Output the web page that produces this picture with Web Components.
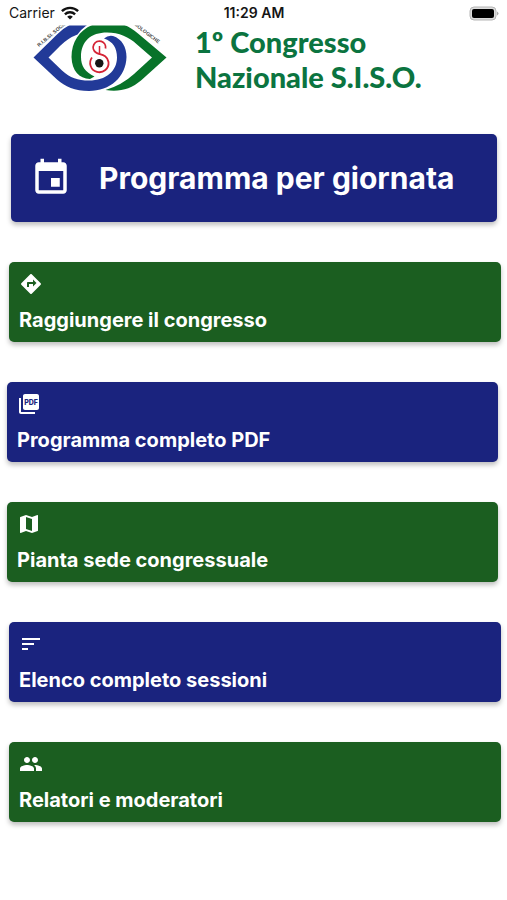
<!DOCTYPE html>
<html lang="it">
<head>
<meta charset="utf-8">
<meta name="viewport" content="width=device-width, initial-scale=1">
<title>1º Congresso Nazionale S.I.S.O.</title>
<style>
  body { margin: 0; background: #fff; font-family: Inter, "Liberation Sans", sans-serif; }
</style>
</head>
<body>
<congress-app></congress-app>

<template id="status-bar">
  <style>
    :host { display: grid; grid-template-columns: 1fr auto 1fr; align-items: center; height: 26px; padding: 0 8px 0 9px; box-sizing: border-box; color: #151515; font-size: 14px; line-height: 26px; }
    .left { display: flex; align-items: center; gap: 6px; }
    .time { font-weight: 600; }
    .right { display: flex; justify-content: flex-end; }
    svg { display: block; }
  </style>
  <div class="left"><span>Carrier</span>
    <svg width="18" height="14" viewBox="0 0 18 14" fill="none" stroke="#111" stroke-width="2.4" aria-label="Wi-Fi"><path d="M.9 5.2C5.400.8 12.600.8 17.100 5.200M3.900 8.300C6.800 5.500 11.200 5.500 14.100 8.300"/><path d="M9 13.600 6.200 10.700Q9 8.500 11.800 10.700Z" fill="#111" stroke="none"/></svg>
  </div>
  <span class="time">11:29 AM</span>
  <div class="right">
    <svg width="31" height="15" viewBox="0 0 31 15" aria-label="Batteria"><rect x="2" y="1" width="26" height="13" rx="4" fill="#ddd" stroke="#b5b5b5"/><rect x="4" y="3" width="22" height="9" rx="2" fill="#000"/><path d="M29 5.500Q32 7.500 29 9.500Z" fill="#aaa"/></svg>
  </div>
</template>

<template id="siso-logo">
  <style>
    :host { display: block; width: 140px; height: 75px; overflow: hidden; }
    svg { display: block; }
    text { font: 700 5px "Liberation Sans", sans-serif; fill: #444; }
  </style>
  <svg width="140" height="75" viewBox="30 20 140 75" role="img" aria-label="Logo S.I.S.O.">
    <defs>
      <clipPath id="band"><rect x="30" y="25.500" width="140" height="70"/></clipPath>
      <path id="arcL" d="M39 47L69 22"/>
      <path id="arcR" d="M131 23L162 46.500"/>
    </defs>
    <g clip-path="url(#band)">
      <path fill="#223a98" d="M33.500 57.500L57 34.500Q64 27 74 23H90Q82 28 77.500 34.500Q68 38 60 46L48.500 57.500L62 70.500C70 78 78 80.500 89 80.500C106 80.500 117 71 117 57.500C117 48 113 41.500 104 38.500Q108 35 113 36C122 39 126.500 47 126.500 57C126 77 110 91 89 91C75 91 65 86.500 57 79.500Z"/>
      <path fill="#087329" d="M166.500 57.500L138 33.500C128 25 119 22 108 22C86 22 71.500 37 71.500 57C72 71 79 78.500 90 79L94.500 76.500C85 72 81 66 81 57C81 41 91 32.500 107 32.500C119 32.500 129 37 137 44.500L152 57.500L134 74Q122 85 105.500 90C119 92.500 131 89 141 80.500Z"/>
      <g fill="none" stroke="#d52335" stroke-width="1.800">
        <path d="M105.500 48.500A6.200 6.200 0 1 0 96 52.500C99 55 107 53.500 108.500 62A9.200 9.200 0 1 1 92 57.500"/>
        <path d="M99.500 46V55" stroke-width="1.500"/>
      </g>
      <circle cx="99.300" cy="63.300" r="4.200" fill="#161616"/>
      <text><textPath href="#arcL">R.I.B.SI. SOCIE</textPath></text>
      <text><textPath href="#arcR">LMOLOGICHE</textPath></text>
    </g>
  </svg>
</template>

<template id="app-header">
  <style>
    :host { display: flex; gap: 25px; height: 75px; padding: 0 30px; margin-top: -6px; }
    h1 { margin: 4px 0 0; color: #0b7440; font: 900 29px/35px Lato, "Open Sans", sans-serif; white-space: nowrap; }
  </style>
  <siso-logo></siso-logo>
  <h1><slot></slot></h1>
</template>

<template id="menu-card">
  <style>
    :host { display: block; --fill: #1a237e; }
    :host([tone="green"]) { --fill: #1b5e20; }
    button { display: flex; flex-direction: column; align-items: flex-start; justify-content: space-between; width: 100%; height: 80px; padding: 10px; border: 0; border-radius: 5px; background: var(--fill); color: #fff; box-shadow: 0 3px 5px rgba(0,0,0,.26); font: 700 20px/24px Inter, sans-serif; text-align: left; cursor: pointer; box-sizing: border-box; }
    .icon { display: block; width: 24px; height: 24px; }
    :host([large]) button { flex-direction: row; align-items: center; justify-content: flex-start; gap: 27px; height: 88px; padding: 0 19px; font-size: 30px; line-height: 40px; }
    :host([large]) .icon { width: 42px; height: 42px; }
    svg { display: block; width: 100%; height: 100%; fill: #fff; }
    svg text { font: 800 7px Inter, sans-serif; fill: var(--fill); }
  </style>
  <button type="button"><span class="icon"></span><span class="label"><slot></slot></span></button>
</template>

<template id="congress-app">
  <style>
    :host { display: block; }
    nav { display: flex; flex-direction: column; gap: 40px; padding: 39px 6px 40px 9px; }
    menu-card[large] { margin: 0 4px 0 2px; }
    .shifted { margin: 0 3px 0 -2px; }
  </style>
  <status-bar></status-bar>
  <app-header>1º Congresso<br>Nazionale S.I.S.O.</app-header>
  <nav>
    <menu-card large icon="event">Programma per giornata</menu-card>
    <menu-card tone="green" icon="directions">Raggiungere il congresso</menu-card>
    <menu-card class="shifted" icon="pdf">Programma completo PDF</menu-card>
    <menu-card class="shifted" tone="green" icon="map">Pianta sede congressuale</menu-card>
    <menu-card icon="sort">Elenco completo sessioni</menu-card>
    <menu-card tone="green" icon="people">Relatori e moderatori</menu-card>
  </nav>
</template>

<script>
  const icons = {
    event: '<path d="M17 12h-5v5h5v-5zM16 1v2H8V1H6v2H5c-1.110 0-1.990.9-1.990 2L3 19c0 1.100.89 2 2 2h14c1.100 0 2-.9 2-2V5c0-1.100-.9-2-2-2h-1V1h-2zm3 18H5V8h14v11z"/>',
    directions: '<path d="M21.710 11.290l-9-9c-.39-.39-1.020-.39-1.410 0l-9 9c-.39.39-.39 1.020 0 1.410l9 9c.39.39 1.020.39 1.410 0l9-9c.39-.38.39-1.010 0-1.410zM14 14.500V12h-4v3H8v-4c0-.55.45-1 1-1h5V7.500l3.500 3.500-3.500 3.500z"/>',
    pdf: '<path d="M20 2H8c-1.100 0-2 .9-2 2v12c0 1.100.9 2 2 2h12c1.100 0 2-.9 2-2V4c0-1.100-.9-2-2-2zM4 6H2v14c0 1.100.9 2 2 2h14v-2H4V6z"/><text x="14" y="12.5" text-anchor="middle">PDF</text>',
    map: '<path d="M20.500 3l-.16.03L15 5.100 9 3 3.360 4.900c-.21.07-.36.25-.36.48V20.500c0 .28.22.5.5.5l.16-.03L9 18.900l6 2.100 5.640-1.900c.21-.07.36-.25.36-.48V3.500c0-.28-.22-.5-.5-.5zM15 19l-6-2.110V5l6 2.110V19z"/>',
    sort: '<path d="M3 18h6v-2H3v2zM3 6v2h18V6H3zm0 7h12v-2H3v2z"/>',
    people: '<path d="M16 11c1.660 0 2.990-1.340 2.990-3S17.660 5 16 5c-1.660 0-3 1.340-3 3s1.340 3 3 3zm-8 0c1.660 0 2.990-1.340 2.990-3S9.660 5 8 5C6.340 5 5 6.340 5 8s1.340 3 3 3zm0 2c-2.330 0-7 1.170-7 3.500V19h14v-2.500c0-2.330-4.670-3.500-7-3.500zm8 0c-.29 0-.62.02-.97.05 1.160.84 1.970 1.970 1.970 3.450V19h6v-2.500c0-2.330-4.670-3.500-7-3.500z"/>'
  };

  class TemplateElement extends HTMLElement {
    constructor() {
      super();
      const template = document.getElementById(this.localName);
      this.attachShadow({ mode: "open" }).append(template.content.cloneNode(true));
    }
  }
  class StatusBar extends TemplateElement {}
  class SisoLogo extends TemplateElement {}
  class AppHeader extends TemplateElement {}
  class MenuCard extends TemplateElement {
    connectedCallback() {
      this.shadowRoot.querySelector(".icon").innerHTML =
        `<svg viewBox="0 0 24 24" aria-hidden="true">${icons[this.getAttribute("icon")]}</svg>`;
    }
  }
  class CongressApp extends TemplateElement {}

  customElements.define("status-bar", StatusBar);
  customElements.define("siso-logo", SisoLogo);
  customElements.define("app-header", AppHeader);
  customElements.define("menu-card", MenuCard);
  customElements.define("congress-app", CongressApp);
</script>
</body>
</html>
